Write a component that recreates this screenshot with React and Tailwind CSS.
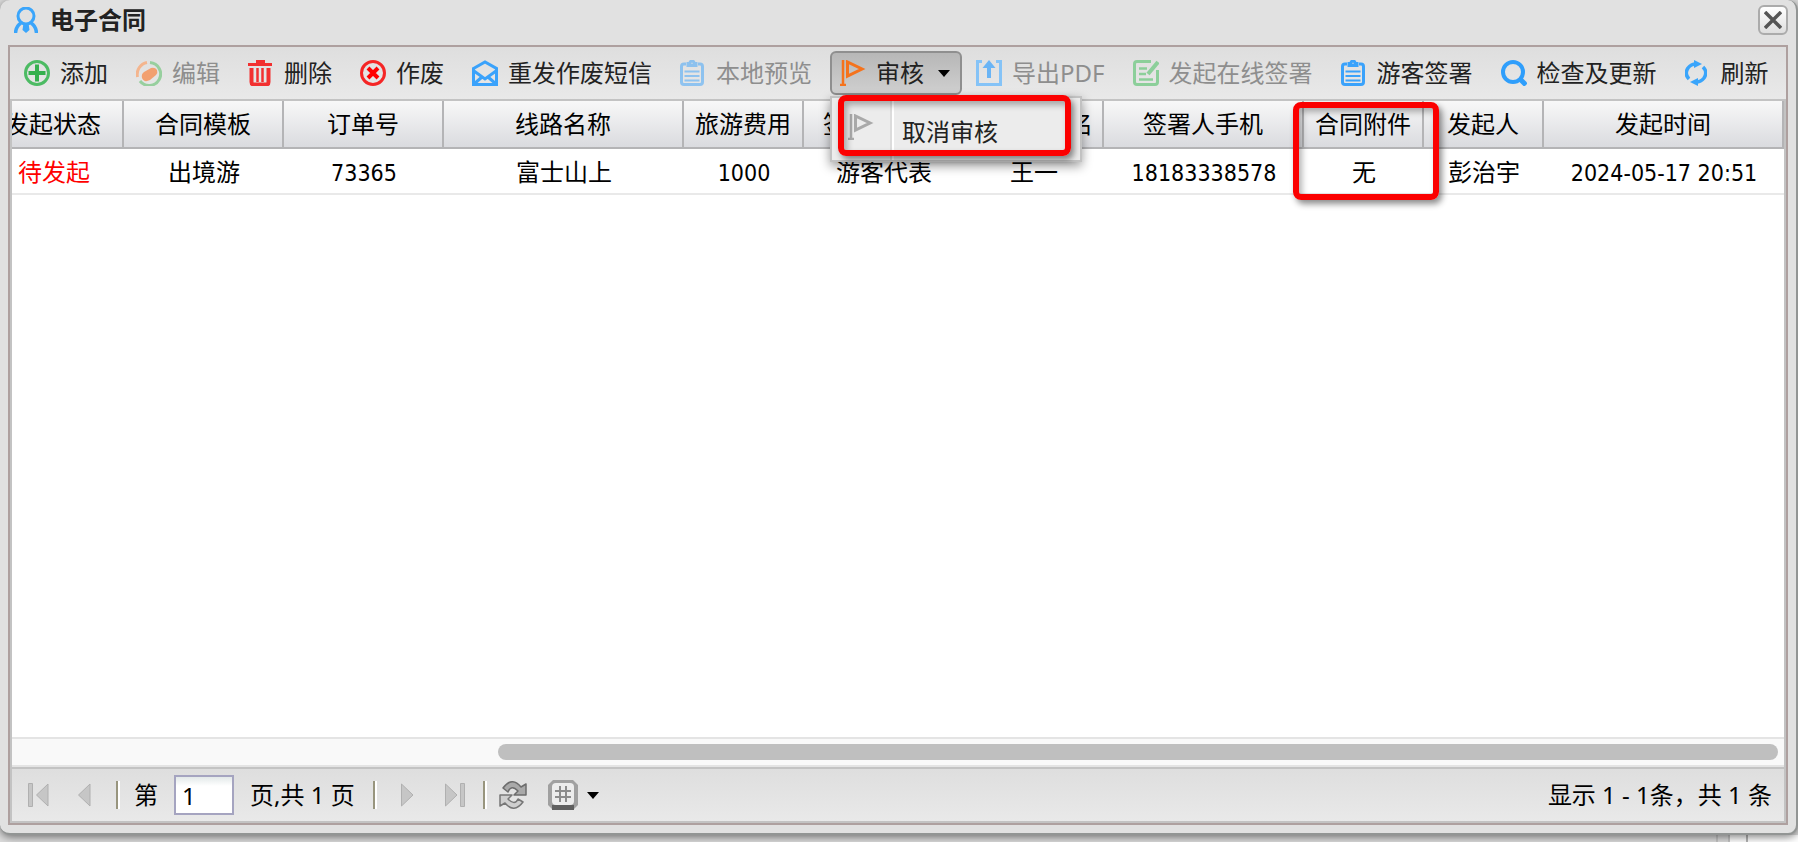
import React, { useState } from "react";

const s = { fill: "none", strokeWidth: 3 };

function Icon({ children, className = "" }) {
    return (
        <svg viewBox="0 0 26 26" className={"h-[26px] w-[26px] shrink-0 " + className} aria-hidden="true">
            {children}
        </svg>
    );
}

const AddIcon = () => (
    <Icon>
        <circle cx="13" cy="13" r="11.5" {...s} stroke="#4cbb63" />
        <path d="M13 4.500v17M4.500 13h17" {...s} strokeWidth="4" stroke="#35b04e" />
    </Icon>
);

const EditIcon = () => (
    <Icon>
        <path d="M11 2.500A12 12 0 0 0 1.500 17" {...s} stroke="#f4b58e" />
        <path d="M14 2.500A11.500 11.500 0 1 1 4 21" {...s} stroke="#97cf9e" />
        <path d="M6 18q-1-4 2-6l7-4q4-1 6 2 1 3-1 5l-6 5q-6 3-8-2z" fill="#f2a070" />
    </Icon>
);

const TrashIcon = () => (
    <Icon>
        <path d="M8 1.500h9M0 4.500h24" {...s} stroke="#f23030" />
        <path d="M3.500 8v14q0 2.500 2.500 2.500h12q2.500 0 2.500-2.500V8" {...s} strokeWidth="4" stroke="#f23030" />
        <path d="M9.500 8v14M14.500 8v14" {...s} strokeWidth="2.500" stroke="#f23030" />
    </Icon>
);

const VoidIcon = () => (
    <Icon>
        <circle cx="13" cy="13" r="11.500" {...s} stroke="#f52626" />
        <path d="M8 8l10 10M18 8L8 18" {...s} strokeWidth="4" stroke="#f00" />
    </Icon>
);

const MailIcon = () => (
    <Icon>
        <path d="M1.500 8.500L13 2l11.500 6.500v16h-23z" {...s} stroke="#3aa2fb" />
        <path d="M2 11l11 8 11-8M2 24l8-7M24 24l-8-7" {...s} strokeWidth="3" stroke="#3aa2fb" />
    </Icon>
);

const ClipboardIcon = ({ className }) => (
    <Icon className={className}>
        <path d="M6 4H4Q1.500 4 1.500 6.500V22q0 2.500 2.500 2.500h16q2.500 0 2.500-2.500V6.500Q22.500 4 20 4h-2" {...s} stroke="#3aa2fb" />
        <path d="M8 5.500V3.500h2Q10 1 12 1t2 2.500h2v2z" {...s} stroke="#3aa2fb" />
        <path d="M4.500 11.500h15M4.500 16h15M4.500 20.500h15" {...s} strokeWidth="2" stroke="#3aa2fb" />
    </Icon>
);

const FlagIcon = ({ color }) => (
    <Icon>
        <path d="M3 0v25M0 25h6" {...s} strokeWidth="2.500" stroke={color} />
        <path d="M7.500 2v14L22 9z" {...s} stroke={color} />
    </Icon>
);

const ExportIcon = () => (
    <Icon>
        <path d="M6 1.500H1.500v23h23v-23H20" {...s} stroke="#85c3f7" />
        <path d="M13 18V6" {...s} strokeWidth="4" stroke="#69b4f5" />
        <path d="M6.500 8L13 0l6.500 8z" fill="#69b4f5" />
    </Icon>
);

const SignIcon = () => (
    <Icon>
        <path d="M18 1.500H4Q1.500 1.500 1.500 4v18q0 2.500 2.500 2.500h18q2.500 0 2.500-2.500V10" {...s} stroke="#8ccf9a" />
        <path d="M6 8.500h8M6 14h7M6 19.500h14" {...s} strokeWidth="2.500" stroke="#8ccf9a" />
        <path d="M15 14l10-12" {...s} strokeWidth="4" stroke="#8ccf9a" />
    </Icon>
);

const SearchIcon = () => (
    <Icon>
        <circle cx="12" cy="12" r="10" {...s} strokeWidth="4" stroke="#2f9efb" />
        <path d="M19 19l6 6" {...s} strokeWidth="5" stroke="#2f9efb" />
    </Icon>
);

const RefreshIcon = () => (
    <svg viewBox="0 0 22 26" className="mr-1 h-[26px] w-[22px] shrink-0" aria-hidden="true">
        <path d="M4 19Q-1 14 3 8q3-4 8-4" {...s} strokeWidth="3.500" stroke="#3aa5fb" />
        <path d="M18 7q5 5 1 11-3 4-8 4" {...s} strokeWidth="3.500" stroke="#3aa5fb" />
        <path d="M9 0l8 4-8 4zM13 18l-8 4 8 4z" fill="#3aa5fb" />
    </svg>
);

const tools = [
    { label: "添加", icon: <AddIcon /> },
    { label: "编辑", icon: <EditIcon />, disabled: true },
    { label: "删除", icon: <TrashIcon /> },
    { label: "作废", icon: <VoidIcon /> },
    { label: "重发作废短信", icon: <MailIcon /> },
    { label: "本地预览", icon: <ClipboardIcon className="opacity-50" />, disabled: true },
    { label: "审核", icon: <FlagIcon color="#f5731d" />, menu: true },
    { label: "导出PDF", icon: <ExportIcon />, disabled: true },
    { label: "发起在线签署", icon: <SignIcon />, disabled: true },
    { label: "游客签署", icon: <ClipboardIcon /> },
    { label: "检查及更新", icon: <SearchIcon /> },
    { label: "刷新", icon: <RefreshIcon /> },
];

const columns = [
    { title: "发起状态", value: "待发起", width: "w-[140px]", style: "text-2xl text-[#f00]" },
    { title: "合同模板", value: "出境游", width: "w-[160px]" },
    { title: "订单号", value: "73365", width: "w-[160px]", style: "text-[23px]" },
    { title: "线路名称", value: "富士山上", width: "w-[240px]" },
    { title: "旅游费用", value: "1000", width: "w-[120px]", style: "text-[23px]" },
    { title: "签署人类型", value: "游客代表", width: "w-[160px]" },
    { title: "签署人姓名", value: "王一", width: "w-[140px]" },
    { title: "签署人手机", value: "18183338578", width: "w-[200px]", style: "text-[23px]" },
    { title: "合同附件", value: "无", width: "w-[120px]", marked: true },
    { title: "发起人", value: "彭治宇", width: "w-[120px]" },
    { title: "发起时间", value: "2024-05-17 20:51", width: "w-[240px]", style: "text-[23px]" },
];

const Caret = ({ className = "" }) => (
    <svg viewBox="0 0 12 7" className={"h-[7px] w-3 shrink-0 " + className} aria-hidden="true">
        <path d="M0 0h12L6 7z" fill="#000" />
    </svg>
);

// red highlight frame drawn over a part of the window
const Mark = ({ className }) => (
    <span className={"pointer-events-none absolute rounded-lg border-6 border-[#fb0000] shadow-[3px_4px_6px_rgba(0,0,0,0.45),inset_3px_4px_6px_rgba(0,0,0,0.3)] " + className} />
);

function ToolButton({ tool, open, onToggle }) {
    return (
        <div className="relative shrink-0">
            <button
                type="button"
                disabled={tool.disabled}
                onClick={tool.menu ? onToggle : undefined}
                className={
                    "flex h-11 items-center gap-2.5 rounded-md border-2 pl-2 leading-8 " +
                    (tool.menu ? "pr-2.5 " : "pr-3 ") +
                    (tool.menu && open ? "border-[#8f8f8f] bg-linear-to-b from-[#b7b7b7] to-[#cfcfcf] " : "border-transparent ") +
                    (tool.disabled ? "text-[#8e8e8e]" : "text-[#222]")
                }
            >
                {tool.icon}
                <span className="whitespace-nowrap">{tool.label}</span>
                {tool.menu && <Caret className="ml-1" />}
            </button>
            {tool.menu && open && (
                <div className="absolute left-0 top-[45px] z-20 flex h-[66px] w-[252px] border-2 border-[#c2c2c2] bg-[#ececec] shadow-[0_4px_10px_rgba(0,0,0,0.4)]">
                    <button type="button" className="flex w-full items-stretch text-[#222]">
                        <span className="w-[60px] border-r-2 border-[#dcdcdc] pl-4 pt-4">
                            <FlagIcon color="#a9a9a9" />
                        </span>
                        <span className="border-l-2 border-white pl-2 pt-[18px] leading-8">取消审核</span>
                    </button>
                    <Mark className="-top-[3px] left-1.5 h-[61px] w-[233px]" />
                </div>
            )}
        </div>
    );
}

const Divider = () => <span className="h-7 w-1 border-l-2 border-r-2 border-l-[#98957e] border-r-white" />;

function PageButton({ label, children }) {
    return (
        <button type="button" disabled aria-label={label} className="flex h-8 w-6 items-center justify-center">
            <svg viewBox="0 0 24 26" className="h-[26px] w-6" fill="#c6c6c6" stroke="#b0b0b0">
                {children}
            </svg>
        </button>
    );
}

function Pager() {
    const [page, setPage] = useState("1");
    return (
        <div className="flex h-[52px] items-center bg-linear-to-b from-[#dedede] to-[#e9e9e9] px-3 text-black">
            <span className="w-0.5" />
            <PageButton label="首页">
                <path d="M2.500 1.500h4v23h-4zM22 2v22L10.500 13z" />
            </PageButton>
            <span className="w-6" />
            <PageButton label="上一页">
                <path d="M16 2v22L4.500 13z" />
            </PageButton>
            <span className="w-[18px]" />
            <Divider />
            <label htmlFor="page" className="mx-3.5">第</label>
            <input
                id="page"
                value={page}
                onChange={(e) => setPage(e.target.value)}
                className="ml-0.5 h-10 w-[60px] border-2 border-[#a5a4c0] bg-linear-to-b from-[#e3e9e9] to-white to-25% px-1.5 outline-none"
            />
            <span className="mx-4 pr-0.5">页,共 1 页</span>
            <Divider />
            <span className="w-[18px]" />
            <PageButton label="下一页">
                <path d="M6.500 2v22L18 13z" />
            </PageButton>
            <span className="w-6" />
            <PageButton label="末页">
                <path d="M2.500 2v22L14 13zM17.500 1.500h4v23h-4z" />
            </PageButton>
            <span className="w-4" />
            <Divider />
            <button type="button" aria-label="刷新列表" className="ml-3">
                <svg viewBox="0 0 28 28" className="h-7 w-7" strokeWidth="1.500" strokeLinejoin="round">
                    <path d="M4 7Q13-5 22 6l5-3v11H15l4-4Q12 3 9 11z" fill="#a9a9a9" stroke="#6c6c6c" />
                    <path d="M24 21Q15 33 6 22l-5 3V14h12l-4 4q7 7 10 0z" fill="#cfcfcf" stroke="#777" />
                </svg>
            </button>
            <button type="button" aria-label="每页条数" className="ml-5 flex items-center gap-2">
                <svg viewBox="0 0 32 32" className="h-8 w-8">
                    <path d="M6 1h20l5 5v20l-5 5H6l-5-5V6z" fill="#a0a0a0" />
                    <path d="M5 26h22v5H5z" fill="#5f5f5f" />
                    <rect x="5" y="4" width="22" height="22" rx="4" fill="#ececec" />
                    <path d="M13 7v16M19 7v16M8 12h16M8 18h16" stroke="#8c8c8c" strokeWidth="2" />
                </svg>
                <Caret />
            </button>
            <span className="ml-auto">显示 1 - 1条，共 1 条</span>
        </div>
    );
}

export default function App() {
    const [open, setOpen] = useState(true);
    return (
        <div className="flex h-screen flex-col overflow-hidden bg-[#dcdcdc] font-['Noto_Sans','Noto_Sans_CJK_SC',sans-serif] text-2xl leading-8">
            <div className="relative z-10 flex min-h-0 flex-1 flex-col rounded-[10px] border-b-2 border-r-2 border-[#929594] bg-[#e1e1e1] px-2 pb-2 shadow-[0_2px_8px_rgba(0,0,0,0.5)]">
                <header className="flex h-[45px] shrink-0 items-center pb-1.5 pl-1.5">
                    <svg viewBox="0 0 24 26" className="h-[26px] w-6" aria-hidden="true">
                        <circle cx="12" cy="9" r="8" {...s} stroke="#3aa5fb" />
                        <path d="M7 16Q2 19 1.500 26M17 16q5 3 5.500 10" {...s} strokeWidth="3.500" stroke="#3aa5fb" />
                        <path d="M9.500 16h5l1 7-3.500 3-3.500-3z" fill="#3aa5fb" />
                    </svg>
                    <h1 className="ml-3 font-bold text-[#222]">电子合同</h1>
                    <button type="button" aria-label="关闭" className="ml-auto flex h-[30px] w-[30px] items-center justify-center rounded-md border-2 border-[#ababab] bg-linear-to-b from-white to-[#dedede]">
                        <svg viewBox="0 0 18 18" className="h-[18px] w-[18px]" stroke="#555" strokeWidth="3.500">
                            <path d="M1 1l16 16M17 1L1 17" />
                        </svg>
                    </button>
                </header>

                <main className="flex min-h-0 flex-1 flex-col border-2 border-[#aea09f]">
                    <div className="flex h-[52px] shrink-0 items-start gap-1 bg-linear-to-b from-[#dedede] to-[#e9e9e9] pl-1 pt-1">
                        {tools.map((tool) => (
                            <ToolButton key={tool.label} tool={tool} open={open} onToggle={() => setOpen(!open)} />
                        ))}
                    </div>

                    <div className="flex min-h-0 flex-1 flex-col border-2 border-[#c3c3c3] bg-white">
                        <div className="flex min-h-0 flex-1 justify-end overflow-hidden">
                            <table className="h-fit w-full min-w-[1800px] table-fixed border-separate border-spacing-0 text-center text-black">
                                <thead>
                                    <tr className="h-12">
                                        {columns.map((c) => (
                                            <th key={c.title} className={"relative whitespace-nowrap border-b-2 border-r-2 border-[#b4b4b6] bg-linear-to-b from-[#f8f8f8] to-[#dadbdf] p-0 font-normal " + c.width}>
                                                {c.title}
                                                {c.marked && <Mark className="-left-[11px] top-px z-10 h-[98px] w-[146px]" />}
                                            </th>
                                        ))}
                                    </tr>
                                </thead>
                                <tbody>
                                    <tr className="h-[46px]">
                                        {columns.map((c) => (
                                            <td key={c.title} className={"whitespace-nowrap border-b-2 border-[#e9e9e9] p-0 pt-1 font-['DejaVu_Sans_Condensed','Noto_Sans_CJK_SC',sans-serif] " + (c.style || "text-2xl")}>
                                                {c.value}
                                            </td>
                                        ))}
                                    </tr>
                                </tbody>
                            </table>
                        </div>
                        <div className="flex h-[30px] shrink-0 items-center border-y-2 border-[#e4e4e4] bg-[#f9f9f9] pr-1.5">
                            <div className="ml-auto h-4 w-[72.5%] rounded-full bg-[#bfbfbf]" />
                        </div>
                        <div className="shrink-0 border-t-2 border-[#c3c3c3]">
                            <Pager />
                        </div>
                    </div>
                </main>
            </div>
            {/* edge of the page behind the window */}
            <div className="flex h-[7px] shrink-0 justify-end">
                <span className="w-3.5 border-x-2 border-[#c4c4c4] bg-[#dcdcdc]" />
                <span className="w-4 bg-white" />
                <span className="w-[52px] border-l-2 border-[#b5b5b5] bg-white" />
            </div>
        </div>
    );
}
